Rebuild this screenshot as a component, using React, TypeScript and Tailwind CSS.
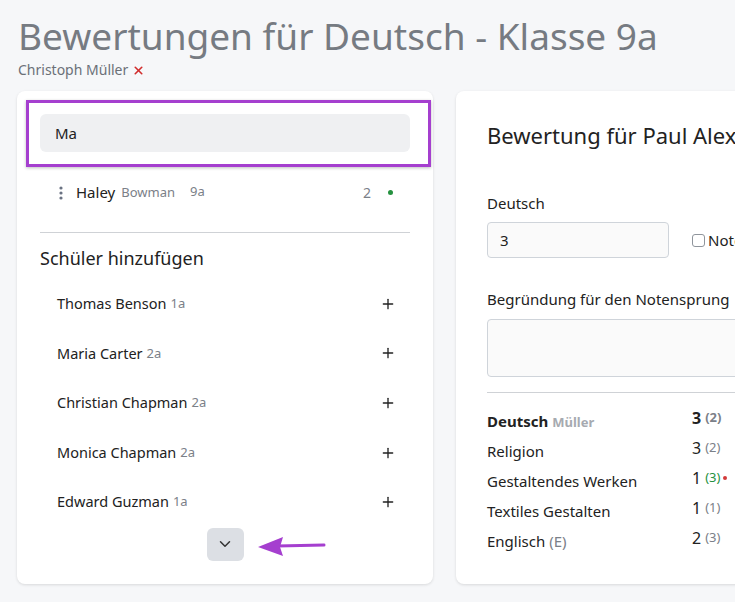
import React from 'react';
import { Plus, ChevronDown, X } from 'lucide-react';

const addable = [
  { name: 'Thomas Benson', cls: '1a' },
  { name: 'Maria Carter', cls: '2a' },
  { name: 'Christian Chapman', cls: '2a' },
  { name: 'Monica Chapman', cls: '2a' },
  { name: 'Edward Guzman', cls: '1a' },
];

function Kebab() {
  return (
    <svg width="4" height="14" viewBox="0 0 4 14" className="text-gray-500">
      <circle cx="2" cy="2" r="1.6" fill="currentColor" />
      <circle cx="2" cy="7" r="1.6" fill="currentColor" />
      <circle cx="2" cy="12" r="1.6" fill="currentColor" />
    </svg>
  );
}

function StudentPanel() {
  return (
    <div className="relative w-[416px] shrink-0 h-[493px] bg-white rounded-lg shadow-[0_1px_3px_rgba(0,0,0,0.12)] px-[23px] pt-[23px]">
      {/* search */}
      <div className="h-[38px] rounded-md bg-[#eff0f2] flex items-center px-[15px] text-[15px] text-[#222]">Ma</div>
      {/* highlight annotation */}
      <div className="absolute left-[9px] top-[9px] w-[405px] h-[67px] border-[3px] border-[#a53fcf] shadow-[0_1px_3px_rgba(0,0,0,0.25)] pointer-events-none" />

      <div className="h-[80px] flex items-center pl-[19px] pr-[17px] pt-[1px]">
        <Kebab />
        <span className="ml-[13px] text-[15px] text-[#222]">Haley</span>
        <span className="ml-[6px] text-[13px] text-[#7b8088]">Bowman</span>
        <span className="ml-[15px] text-[13px] text-[#7b8088] -mt-[2px]">9a</span>
        <span className="ml-auto text-[14px] text-[#7b8088]">2</span>
        <span className="ml-[17px] w-[5px] h-[5px] rounded-full bg-[#25913f]" />
      </div>
      <div className="border-t border-[#cfd2d6]" />

      <div className="pt-[13px] text-[18px] text-[#222] leading-[24px]">Schüler hinzufügen</div>
      <div className="mt-[9px] flex flex-col">
        {addable.map((s) => (
          <div key={s.name} className="h-[49.6px] flex items-center pl-[17px] pr-[14px]">
            <span className="text-[14.5px] text-[#222]">{s.name}</span>
            <span className="ml-[4px] text-[13px] text-[#7b8088]">{s.cls}</span>
            <Plus className="ml-auto text-[#222]" size={16} strokeWidth={2} />
          </div>
        ))}
      </div>
      <div className="flex justify-center mt-[1px]">
        <div className="w-[37px] h-[33px] rounded-md bg-[#dcdfe4] flex items-center justify-center">
          <ChevronDown size={18} strokeWidth={2} className="text-[#333]" />
        </div>
      </div>
      {/* pointer annotation */}
      <svg className="absolute left-[240px] top-[444px]" width="70" height="24" viewBox="0 0 70 24">
        <line x1="20" y1="11" x2="67" y2="10" stroke="#a53fcf" strokeWidth="3" strokeLinecap="round" />
        <polygon points="1,12 26,2 23,12 26,21" fill="#a53fcf" />
      </svg>
    </div>
  );
}

const grades = [
  { subject: 'Deutsch', teacher: 'Müller', grade: '3', prev: '(2)', bold: true },
  { subject: 'Religion', grade: '3', prev: '(2)' },
  { subject: 'Gestaltendes Werken', grade: '1', prev: '(3)', jump: true },
  { subject: 'Textiles Gestalten', grade: '1', prev: '(1)' },
  { subject: 'Englisch', extra: '(E)', grade: '2', prev: '(3)' },
];

function GradePanel() {
  return (
    <div className="w-[420px] shrink-0 h-[493px] bg-white rounded-lg shadow-[0_1px_3px_rgba(0,0,0,0.12)] pl-[31px] pt-[29px]">
      <h2 className="text-[22px] text-[#222] leading-[30px] whitespace-nowrap">Bewertung für Paul Alexander Becker</h2>

      <div className="mt-[43px] text-[15px] text-[#222] leading-[20px]">Deutsch</div>
      <div className="mt-[9px] flex items-center">
        <div className="w-[182px] h-[36px] rounded border border-[#cfd4da] bg-[#fafafa] flex items-center px-[12px] text-[15px] text-[#222]">3</div>
        <label className="ml-[23px] flex items-center text-[15px] text-[#222] whitespace-nowrap">
          <span className="w-[13px] h-[13px] rounded-[3px] border border-[#8f959c] bg-white mr-[3px]" />
          Notenschutz
        </label>
      </div>

      <div className="mt-[31px] text-[15px] text-[#222] leading-[20px]">Begründung für den Notensprung</div>
      <div className="mt-[10px] h-[58px] rounded border border-[#cfd4da] bg-[#fafafa]" />

      <div className="mt-[15px] border-t border-[#cfd2d6]" />
      <div className="mt-[12px] flex flex-col">
        {grades.map((g) => (
          <div key={g.subject} className="h-[30px] flex items-start">
            <div className="w-[205px] pt-[5px] text-[15px] text-[#222] whitespace-nowrap">
              <span className={g.bold ? 'font-bold' : ''}>{g.subject}</span>
              {g.teacher && <span className="ml-[4px] text-[13px] font-bold text-[#a6aab0]">{g.teacher}</span>}
              {g.extra && <span className="ml-[4px] text-[#7b8088]">{g.extra}</span>}
            </div>
            <div className="flex items-center pt-[1px] whitespace-nowrap">
              <span className={`text-[16px] text-[#222] ${g.bold ? 'font-bold' : ''}`}>{g.grade}</span>
              <span className={`ml-[4px] text-[13px] ${g.jump ? 'text-[#25913f]' : 'text-[#7b8088]'} ${g.bold ? 'font-bold' : ''}`}>{g.prev}</span>
              {g.jump && <span className="ml-[3px] w-[4px] h-[4px] rounded-full bg-[#d33a3a]" />}
            </div>
          </div>
        ))}
      </div>
    </div>
  );
}

export default function App() {
  return (
    <div className="w-[735px] h-[602px] overflow-hidden bg-[#f6f7f9]" style={{ fontFamily: '"Noto Sans", Lato, sans-serif' }}>
      <div className="pl-[18px] pt-[12px]">
        <h1 className="text-[37px] leading-[48px] text-[#767b82] whitespace-nowrap">
          Bewertungen für Deutsch - Klasse 9a
        </h1>
        <div className="flex items-center text-[14px] text-[#6b7078] leading-[18px] mt-[1px]">
          Christoph Müller
          <X size={13} strokeWidth={3} className="ml-[4px] text-[#d12c2c]" />
        </div>
      </div>
      <div className="mt-[12px] flex gap-[23px] pl-[17px]">
        <StudentPanel />
        <GradePanel />
      </div>
    </div>
  );
}
